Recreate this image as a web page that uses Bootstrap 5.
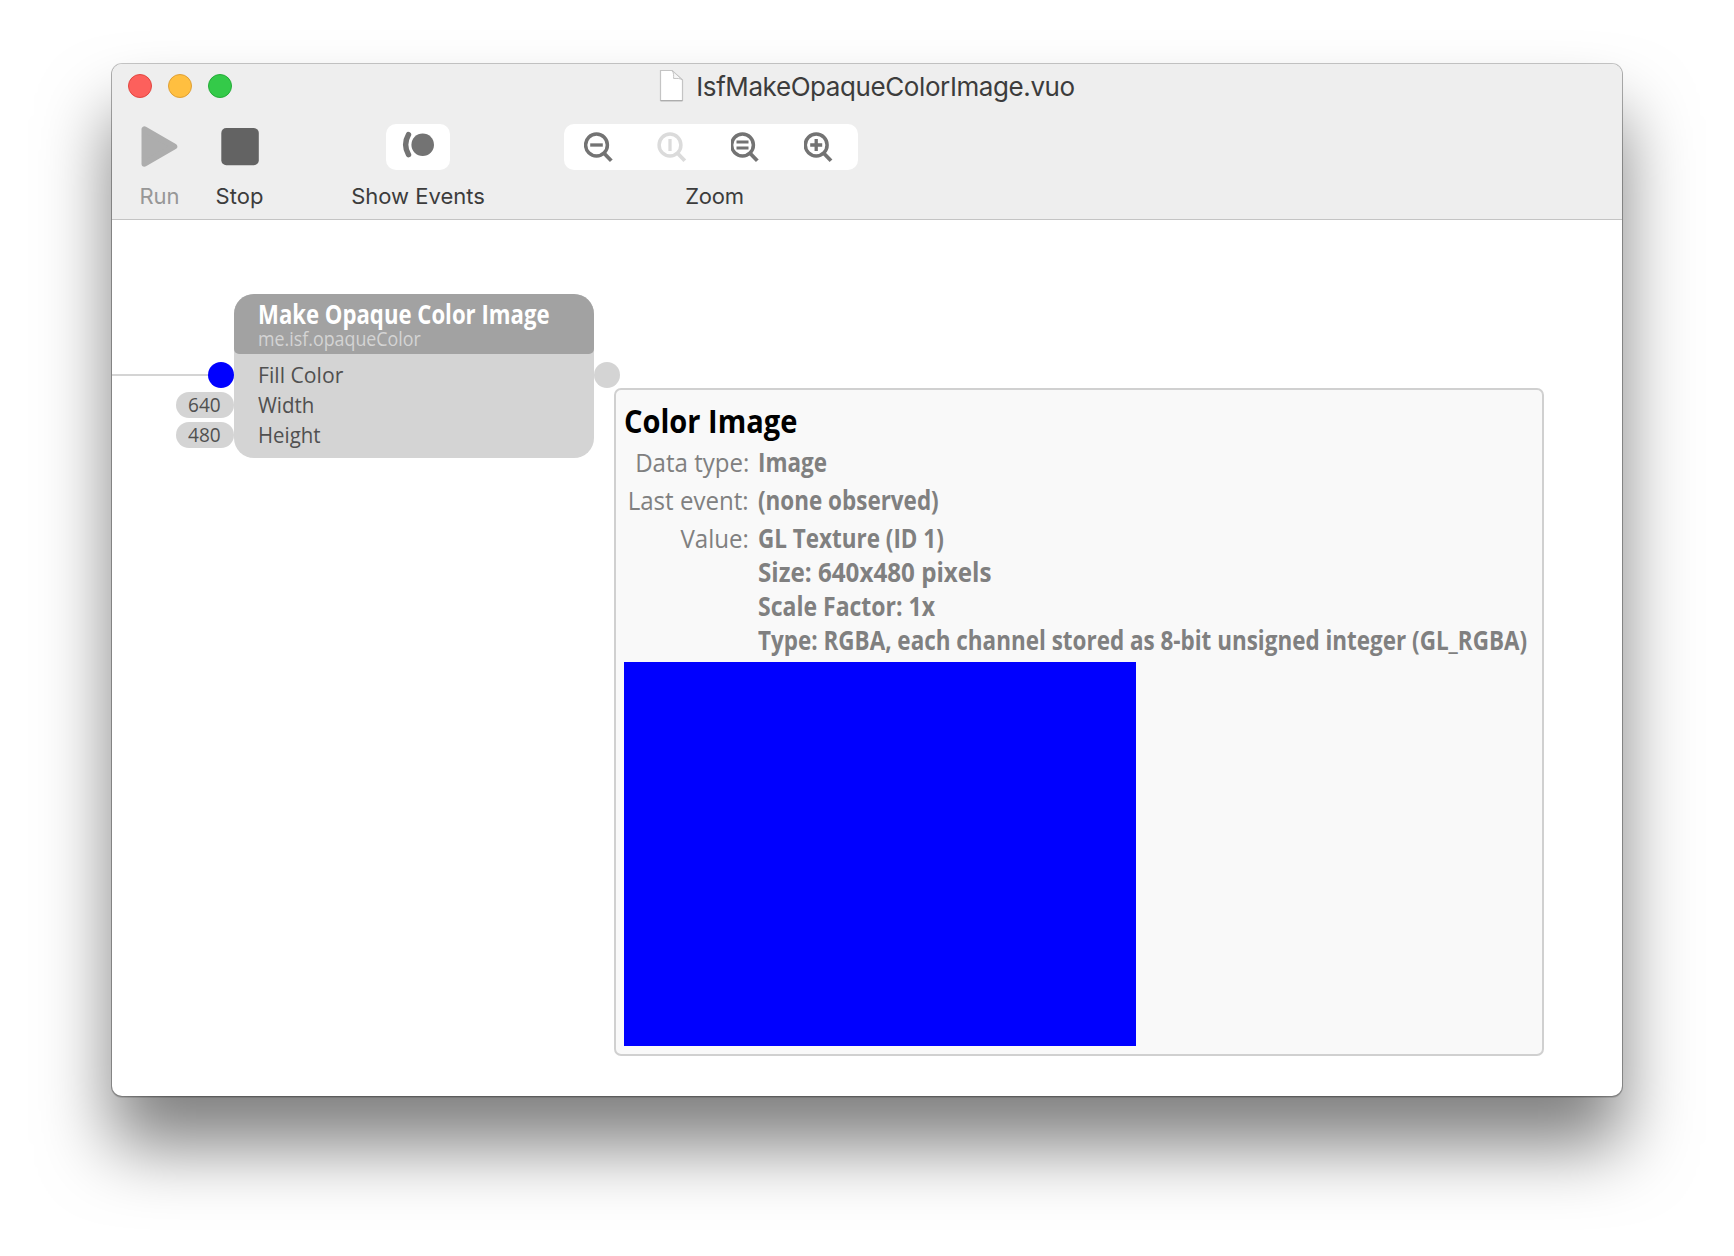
<!DOCTYPE html>
<html lang="en">
<head>
<meta charset="utf-8">
<meta name="viewport" content="width=device-width, initial-scale=1">
<title>IsfMakeOpaqueColorImage.vuo</title>
<link href="https://cdn.jsdelivr.net/npm/bootstrap@5.3.0/dist/css/bootstrap.min.css" rel="stylesheet">
<style>
body { height: 1256px; overflow: hidden; background: #fff; font-family: Inter, "Liberation Sans", sans-serif; }
.app-window { width: 1510px; height: 1032px; margin-top: 64px; border-radius: 10px;
  box-shadow: 0 0 0 1px rgba(0,0,0,.22), 0 1px 0 1px rgba(0,0,0,.12), 0 50px 70px rgba(0,0,0,.5); }
.app-head { height: 156px; background: #eee; border-bottom: 1px solid #c4c4c4; border-radius: 10px 10px 0 0; color: #3c3c3c; }
.titlebar { display: grid; grid-template-columns: 1fr auto 1fr; height: 45px; padding-left: 16px; padding-right: 16px; }
.lights { gap: 16px; height: 44px; }
.light { width: 24px; height: 24px; border-radius: 50%; border: 1px solid; }
.light-r { background: #fd605c; border-color: #e24640; }
.light-y { background: #ffbf40; border-color: #dfa035; }
.light-g { background: #34ca49; border-color: #24ac38; }
.doc-title { font-size: 26px; line-height: 46px; letter-spacing: -.41px; gap: 11px; }
.doc-title svg { margin-top: 5px; }
.tools { padding: 15px 0 0 8px; }
.tool { font-size: 22px; }
.tool-face { height: 46px; }
.tool-label { margin-top: 13px; line-height: 27px; white-space: nowrap; }
.tool-sm { width: 80px; }
.tool-sm .tool-label { padding-right: 1px; }
.tool-events { width: 134px; margin-left: 71px; }
.tool-zoom { width: 294px; margin-left: 79px; }
.tool-off { color: #979797; }
.seg { background: #fff; border-radius: 10px; height: 46px; }
.zoom-label { padding-left: 7px; letter-spacing: -.2px; }
.canvas { height: 876px; font-family: "Open Sans", "Noto Sans", sans-serif; }
.vnode { left: 122px; top: 74px; width: 360px; height: 164px; border-radius: 20px; background: #d4d4d4; color: #505050; }
.vnode-head { height: 60px; padding: 3px 0 0 24px; background: #a2a2a2; border-radius: 20px 20px 5px 5px; }
.squeeze { display: block; width: max-content; transform-origin: 0 50%; transform: scaleX(var(--sx)); }
.vnode-title { --sx: .852; font-size: 26px; font-weight: 700; line-height: 35px; color: #fff; }
.vnode-sub { --sx: .892; font-size: 20px; line-height: 13px; color: #d4d4d4; }
.vnode-rows { padding: 6px 0 8px 24px; }
.vrow { height: 30px; font-size: 22px; line-height: 29px; }
.vrow .squeeze { --sx: .928; }
.vrow .squeeze-fill { --sx: .963; }
.port { width: 26px; height: 26px; border-radius: 50%; top: 2px; }
.port-in { left: -50px; background: #00f; }
.port-out { left: 336px; background: #d4d4d4; }
.port-pill { left: -82px; top: 2px; width: 58px; height: 26px; border-radius: 13px; background: #d4d4d4; font-size: 20.5px; line-height: 25px; padding-left: 12px; }
.cable { left: -146px; top: 14px; width: 100px; height: 2px; background: #d4d4d4; }
.popover-box { left: 502px; top: 168px; width: 930px; height: 668px; border: 2px solid #d0d0d0; border-radius: 7px; background: #f9f9f9; padding: 9px 8px 8px; color: #808080; font-size: 26px; }
.pop-title { --sx: .88; font-size: 33px; font-weight: 700; line-height: 43px; color: #000; margin: 0 0 3px; }
.facts { display: grid; grid-template-columns: 125px auto; column-gap: 9px; row-gap: 4px; line-height: 34px; margin: 0 0 5px; white-space: nowrap; }
.facts dt { --sx: .926; font-weight: 400; justify-self: end; transform-origin: 100% 50%; }
.facts dd { --sx: .8635; font-weight: 700; margin: 0; }
.squeeze-sm { --sx: .885; }
.squeeze-xs { --sx: .93; }
.swatch { width: 512px; height: 384px; background: #00f; }
</style>
</head>
<body>
<main class="app-window mx-auto bg-white">
  <header class="app-head">
    <div class="titlebar">
      <div class="lights d-flex align-items-center">
        <span class="light light-r"></span><span class="light light-y"></span><span class="light light-g"></span>
      </div>
      <div class="doc-title d-flex align-items-start">
        <svg width="26" height="34" viewBox="0 0 26 34">
          <path d="M1.5 1.5H13L23.5 11V31.5H1.5Z" fill="#fff" stroke="#c4c4c4" stroke-width="1.2"/>
          <path d="M1.5 31.8H23.5" stroke="#a8a8a8" stroke-width="1.2"/>
          <path d="M13 1.5C15 4 14.6 6.500 14.600 9.500C18 9.500 21 9 23.500 11Z" fill="#f7f7f7" stroke="#c4c4c4" stroke-width="1"/>
        </svg>
        <span>IsfMakeOpaqueColorImage.vuo</span>
      </div>
    </div>
    <div class="tools d-flex">
      <div class="tool tool-sm tool-off text-center">
        <div class="tool-face d-flex align-items-center justify-content-center">
          <svg width="38" height="44" viewBox="0 0 38 44"><path d="M3.500 4.300V38.700L33.300 21.500Z" fill="#adadad" stroke="#adadad" stroke-width="6" stroke-linejoin="round"/></svg>
        </div>
        <div class="tool-label">Run</div>
      </div>
      <div class="tool tool-sm text-center">
        <div class="tool-face d-flex align-items-center justify-content-center">
          <svg width="38" height="38" viewBox="0 0 38 38"><rect x="0.300" y="0" width="37.500" height="37.300" rx="5" fill="#636363"/></svg>
        </div>
        <div class="tool-label">Stop</div>
      </div>
      <div class="tool tool-events text-center">
        <div class="seg d-flex align-items-center justify-content-center mx-auto" style="width:64px">
          <svg width="34" height="34" viewBox="0 0 34 34"><circle cx="21.700" cy="14.700" r="11.300" fill="#737373"/><path d="M7.500 4.700Q1.800 14.700 7.500 24.700" fill="none" stroke="#737373" stroke-width="5.400" stroke-linecap="round"/></svg>
        </div>
        <div class="tool-label">Show Events</div>
      </div>
      <div class="tool tool-zoom text-center">
        <div class="seg row row-cols-4 g-0 align-items-center">
          <div class="col"><svg class="d-block mx-auto" width="34" height="34" viewBox="0 0 34 34" fill="none" stroke="#737373" stroke-width="3.500"><circle cx="12.500" cy="15" r="10.900"/><path d="M19.800 23L27.300 30.800" stroke-width="3.800"/><path d="M6.200 15H18.800" stroke-width="3.300"/></svg></div>
          <div class="col"><svg class="d-block mx-auto" width="34" height="34" viewBox="0 0 34 34" fill="none" stroke="#dbdbdb" stroke-width="3.500"><circle cx="13" cy="15" r="10.900"/><path d="M20.300 23L27.800 30.800" stroke-width="3.800"/><path d="M13 9V21" stroke-width="3.300"/></svg></div>
          <div class="col"><svg class="d-block mx-auto" width="34" height="34" viewBox="0 0 34 34" fill="none" stroke="#737373" stroke-width="3.500"><circle cx="11.500" cy="15" r="10.900"/><path d="M18.800 23L26.300 30.800" stroke-width="3.800"/><path d="M5.500 12H17.500M5.500 18H17.500" stroke-width="3.200"/></svg></div>
          <div class="col"><svg class="d-block mx-auto" width="34" height="34" viewBox="0 0 34 34" fill="none" stroke="#737373" stroke-width="3.500"><circle cx="12.200" cy="15" r="10.900"/><path d="M19.500 23L27 30.800" stroke-width="3.800"/><path d="M6.200 15H18.200M12.200 9V21" stroke-width="3.300"/></svg></div>
        </div>
        <div class="tool-label zoom-label">Zoom</div>
      </div>
    </div>
  </header>
  <section class="canvas position-relative">
    <article class="vnode position-absolute">
      <div class="vnode-head">
        <div class="vnode-title squeeze">Make Opaque Color Image</div>
        <div class="vnode-sub squeeze">me.isf.opaqueColor</div>
      </div>
      <div class="vnode-rows">
        <div class="vrow position-relative"><span class="cable position-absolute"></span><span class="port port-in position-absolute"></span><span class="squeeze squeeze-fill">Fill Color</span><span class="port port-out position-absolute"></span></div>
        <div class="vrow position-relative"><span class="port-pill position-absolute"><span class="squeeze">640</span></span><span class="squeeze">Width</span></div>
        <div class="vrow position-relative"><span class="port-pill position-absolute"><span class="squeeze">480</span></span><span class="squeeze">Height</span></div>
      </div>
    </article>
    <aside class="popover-box position-absolute">
      <h1 class="pop-title squeeze">Color Image</h1>
      <dl class="facts">
        <dt class="squeeze">Data type:</dt>
        <dd><span class="squeeze">Image</span></dd>
        <dt class="squeeze">Last event:</dt>
        <dd><span class="squeeze">(none observed)</span></dd>
        <dt class="squeeze">Value:</dt>
        <dd>
          <span class="squeeze">GL Texture (ID 1)</span>
          <span class="squeeze squeeze-xs">Size: 640x480 pixels</span>
          <span class="squeeze squeeze-sm">Scale Factor: 1x</span>
          <span class="squeeze">Type: RGBA, each channel stored as 8-bit unsigned integer (GL_RGBA)</span>
        </dd>
      </dl>
      <div class="swatch"></div>
    </aside>
  </section>
</main>
<script src="https://cdn.jsdelivr.net/npm/bootstrap@5.3.0/dist/js/bootstrap.bundle.min.js"></script>
</body>
</html>
